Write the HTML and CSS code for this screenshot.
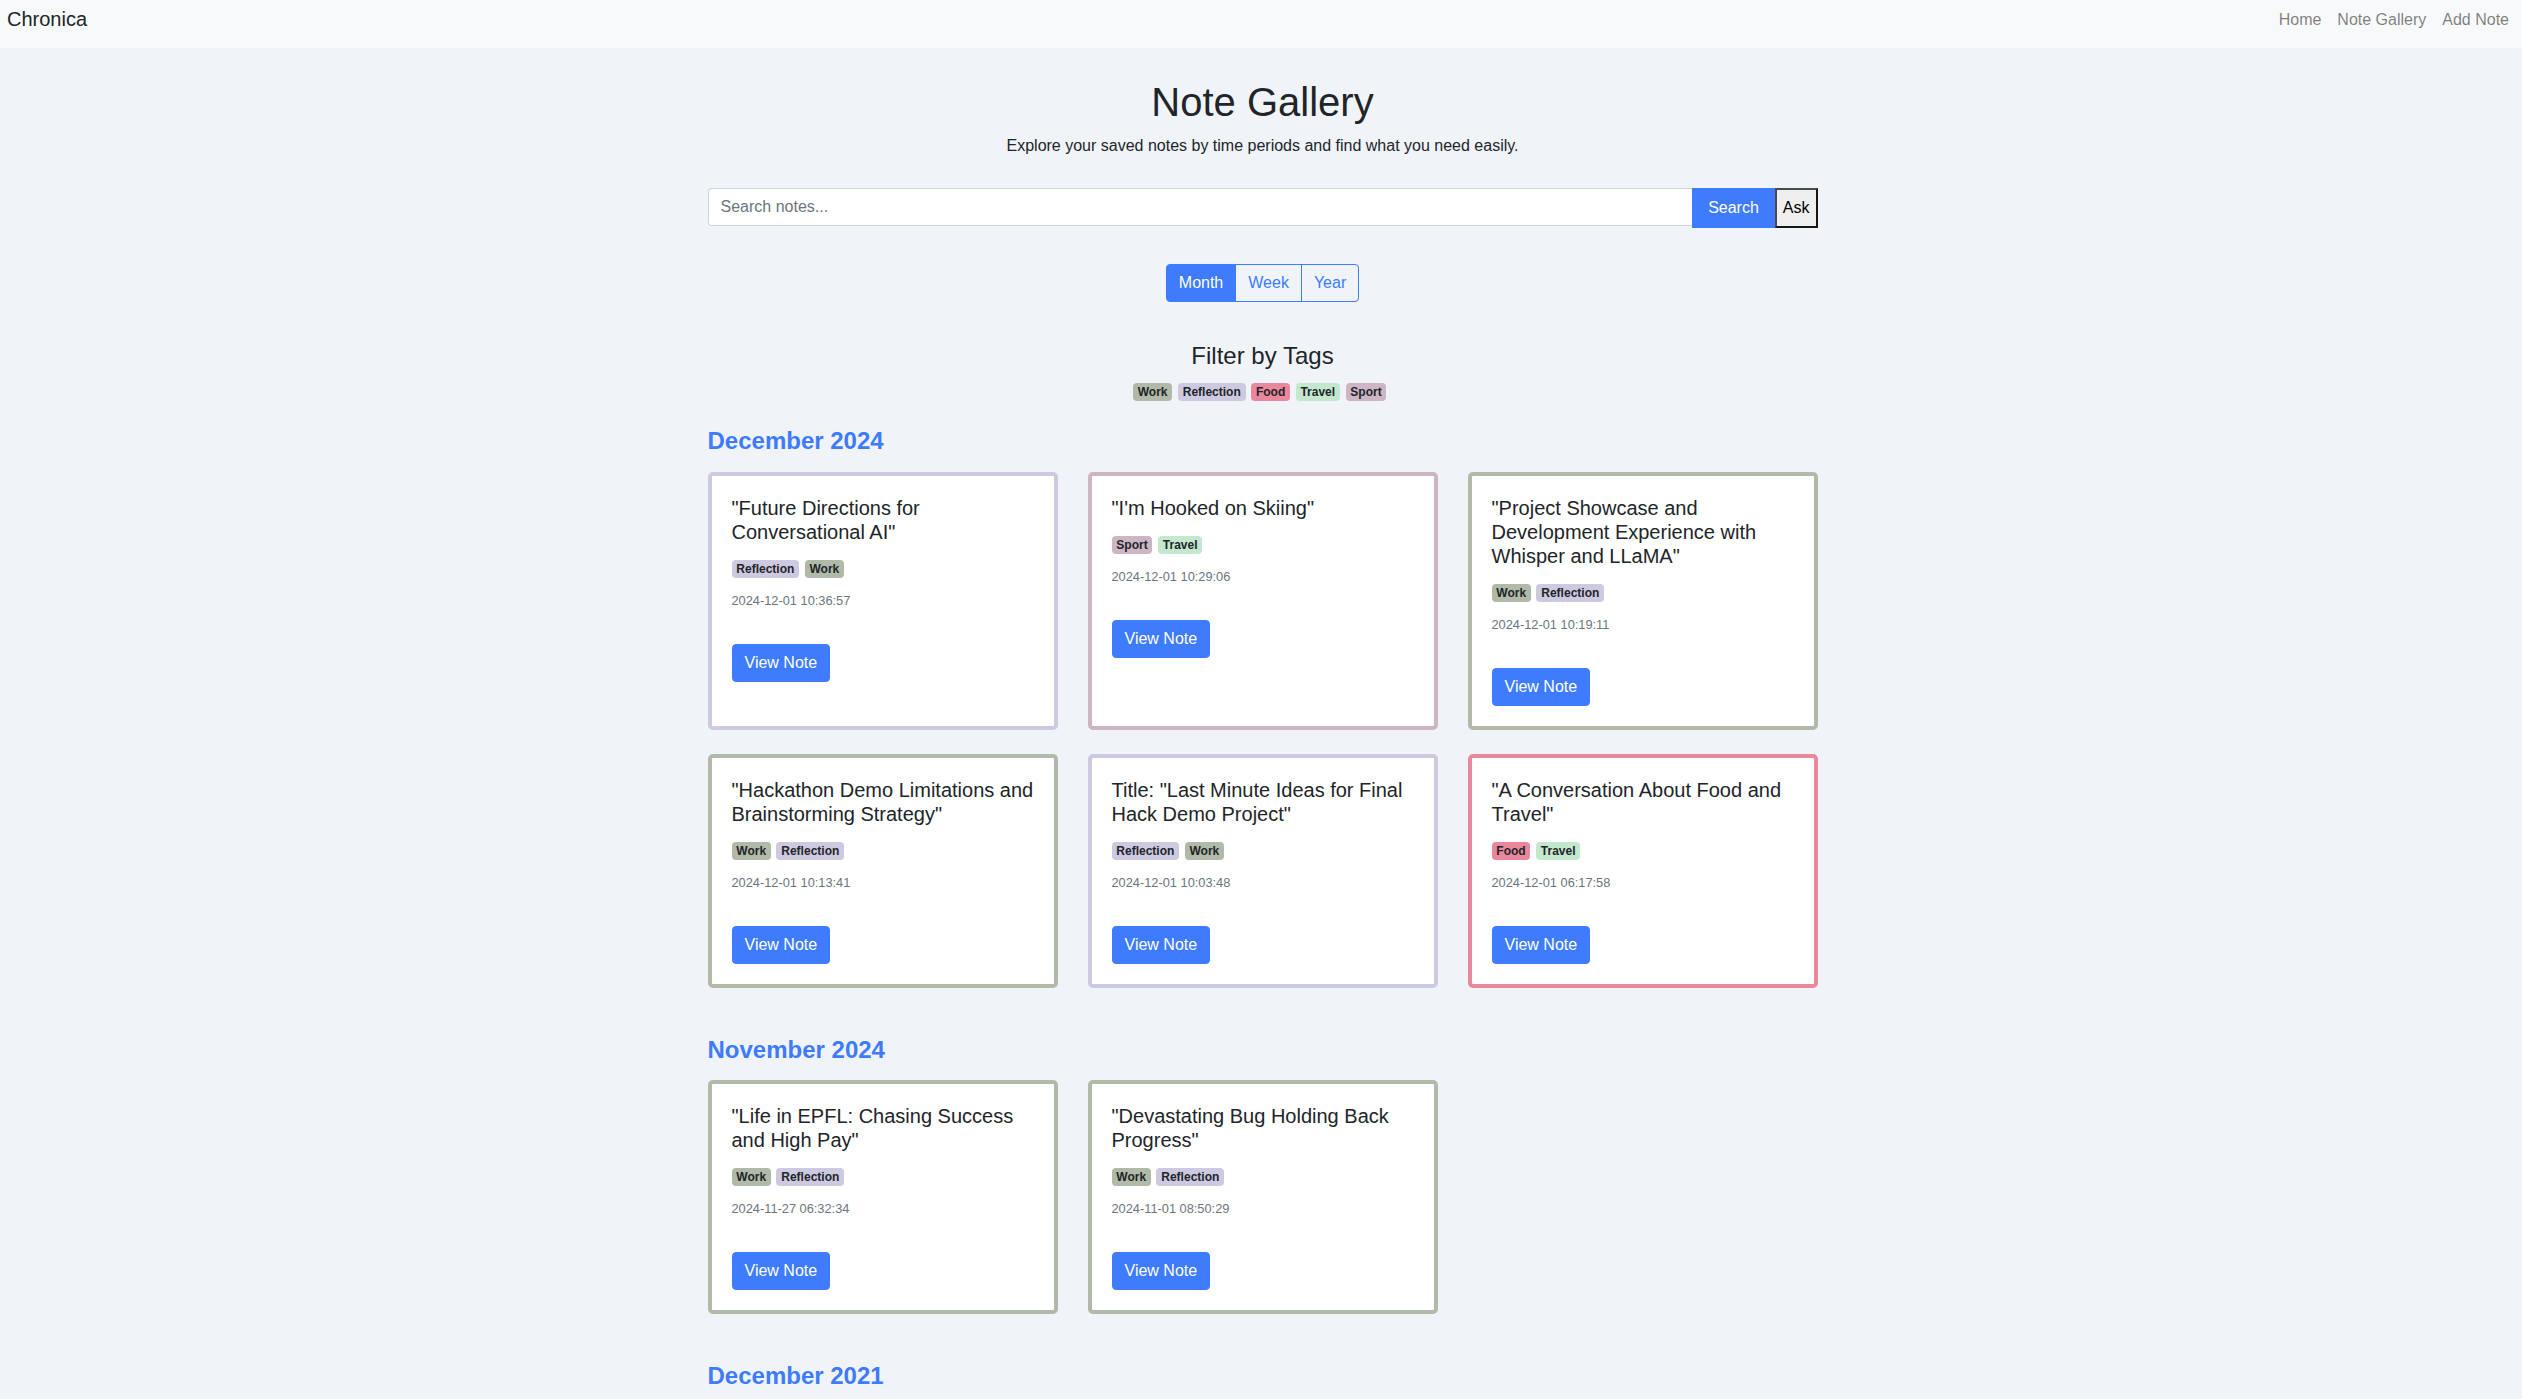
FILE: index.html
```html
<!DOCTYPE html>
<html lang="en">
<head>
<meta charset="utf-8">
<title>Chronica - Note Gallery</title>
<link rel="stylesheet" href="styles.css">
</head>
<body>
<nav class="navbar">
  <a class="brand" href="#">Chronica</a>
  <ul class="nav">
    <li><a class="nav-link" href="#">Home</a></li>
    <li><a class="nav-link" href="#">Note Gallery</a></li>
    <li><a class="nav-link" href="#">Add Note</a></li>
  </ul>
</nav>

<div class="page">
<main class="container">
  <header class="header">
    <h1 class="title">Note Gallery</h1>
    <p class="subtitle">Explore your saved notes by time periods and find what you need easily.</p>
  </header>

  <form class="search-row" onsubmit="return false">
    <input class="search-input" type="text" placeholder="Search notes...">
    <button class="search-btn" type="submit">Search</button>
    <button class="ask-btn" type="button">Ask</button>
  </form>

  <div class="toggle-wrap">
    <div class="btn-group">
      <button class="toggle active" type="button">Month</button><button class="toggle" type="button">Week</button><button class="toggle" type="button">Year</button>
    </div>
  </div>

  <section class="filter">
    <h4 class="filter-title">Filter by Tags</h4>
    <div class="tag-line"><span class="badge work">Work</span><span class="badge reflection">Reflection</span><span class="badge food">Food</span><span class="badge travel">Travel</span><span class="badge sport">Sport</span></div>
  </section>

  <section class="period">
    <h3 class="period-title">December 2024</h3>
    <div class="grid">
      <article class="card b-reflection">
        <h5 class="card-title">"Future Directions for Conversational AI"</h5>
        <div class="tag-line tags"><span class="badge reflection">Reflection</span><span class="badge work">Work</span></div>
        <p class="date"><small>2024-12-01 10:36:57</small></p>
        <a class="view-btn" href="#">View Note</a>
      </article>
      <article class="card b-sport">
        <h5 class="card-title">"I'm Hooked on Skiing"</h5>
        <div class="tag-line tags"><span class="badge sport">Sport</span><span class="badge travel">Travel</span></div>
        <p class="date"><small>2024-12-01 10:29:06</small></p>
        <a class="view-btn" href="#">View Note</a>
      </article>
      <article class="card b-work">
        <h5 class="card-title">"Project Showcase and Development Experience with Whisper and LLaMA"</h5>
        <div class="tag-line tags"><span class="badge work">Work</span><span class="badge reflection">Reflection</span></div>
        <p class="date"><small>2024-12-01 10:19:11</small></p>
        <a class="view-btn" href="#">View Note</a>
      </article>
      <article class="card b-work">
        <h5 class="card-title">"Hackathon Demo Limitations and Brainstorming Strategy"</h5>
        <div class="tag-line tags"><span class="badge work">Work</span><span class="badge reflection">Reflection</span></div>
        <p class="date"><small>2024-12-01 10:13:41</small></p>
        <a class="view-btn" href="#">View Note</a>
      </article>
      <article class="card b-reflection">
        <h5 class="card-title">Title: "Last Minute Ideas for Final Hack Demo Project"</h5>
        <div class="tag-line tags"><span class="badge reflection">Reflection</span><span class="badge work">Work</span></div>
        <p class="date"><small>2024-12-01 10:03:48</small></p>
        <a class="view-btn" href="#">View Note</a>
      </article>
      <article class="card b-food">
        <h5 class="card-title">"A Conversation About Food and Travel"</h5>
        <div class="tag-line tags"><span class="badge food">Food</span><span class="badge travel">Travel</span></div>
        <p class="date"><small>2024-12-01 06:17:58</small></p>
        <a class="view-btn" href="#">View Note</a>
      </article>
    </div>
  </section>

  <section class="period">
    <h3 class="period-title">November 2024</h3>
    <div class="grid">
      <article class="card b-work">
        <h5 class="card-title">"Life in EPFL: Chasing Success and High Pay"</h5>
        <div class="tag-line tags"><span class="badge work">Work</span><span class="badge reflection">Reflection</span></div>
        <p class="date"><small>2024-11-27 06:32:34</small></p>
        <a class="view-btn" href="#">View Note</a>
      </article>
      <article class="card b-work">
        <h5 class="card-title">"Devastating Bug Holding Back Progress"</h5>
        <div class="tag-line tags"><span class="badge work">Work</span><span class="badge reflection">Reflection</span></div>
        <p class="date"><small>2024-11-01 08:50:29</small></p>
        <a class="view-btn" href="#">View Note</a>
      </article>
    </div>
  </section>

  <section class="period">
    <h3 class="period-title">December 2021</h3>
    <div class="grid">
      <article class="card b-reflection">
        <h5 class="card-title">"Looking Back on the Year"</h5>
        <div class="tag-line tags"><span class="badge reflection">Reflection</span></div>
        <p class="date"><small>2021-12-31 22:10:05</small></p>
        <a class="view-btn" href="#">View Note</a>
      </article>
    </div>
  </section>
</main>
</div>
</body>
</html>
```

FILE: styles.css
```css
* { box-sizing: border-box; }

html, body {
  margin: 0;
  padding: 0;
}

body {
  background: #f0f4f9;
  color: #212529;
  font-family: "Liberation Sans", Arial, Helvetica, sans-serif;
  font-size: 16px;
  line-height: 1.5;
}

a { text-decoration: none; }

/* Navbar */
.navbar {
  height: 48px;
  background: #f8f9fa;
  display: flex;
  justify-content: space-between;
  align-items: flex-start;
  padding: 0 5px 0 7px;
}

.brand {
  margin-top: 4px;
  font-size: 20px;
  line-height: 30px;
  color: #212529;
}

.nav {
  display: flex;
  list-style: none;
  margin: 0;
  padding: 0;
}

.nav-link {
  display: block;
  padding: 8px 8px;
  line-height: 24px;
  color: rgba(0, 0, 0, 0.5);
}

/* Page */
.page {
  padding-left: 3px;
}

.container {
  width: 1110px;
  margin: 0 auto;
  padding-top: 30px;
  padding-bottom: 40px;
}

.header { text-align: center; }

.title {
  margin: 0 0 8px;
  font-size: 40px;
  line-height: 48px;
  font-weight: 500;
}

.subtitle {
  margin: 0 0 30px;
  font-size: 16px;
  line-height: 24px;
}

/* Search */
.search-row {
  display: flex;
  align-items: flex-start;
  height: 40px;
  margin: 0;
}

.search-input {
  flex: 1;
  height: 38px;
  padding: 6px 12px;
  font-family: inherit;
  font-size: 16px;
  line-height: 24px;
  color: #495057;
  background: #fff;
  border: 1px solid #ced4da;
  border-right: none;
  border-radius: 4px 0 0 4px;
  outline: none;
}

.search-input::placeholder { color: #6c757d; }

.search-btn {
  height: 40px;
  padding: 0 16px;
  font-family: inherit;
  font-size: 16px;
  color: #fff;
  background: #3e7bfd;
  border: none;
  border-radius: 0;
}

.ask-btn {
  height: 40px;
  padding: 0 6px;
  font-family: inherit;
  font-size: 16px;
  color: #000;
  background: #efefef;
  border: 2px solid;
  border-color: #4a4a4a #161616 #161616 #4a4a4a;
  border-radius: 0;
}

/* Toggle */
.toggle-wrap {
  display: flex;
  justify-content: center;
  margin-top: 36px;
}

.btn-group { display: inline-flex; }

.toggle {
  height: 38px;
  padding: 6px 12px;
  font-family: inherit;
  font-size: 16px;
  line-height: 24px;
  color: #3e7bfd;
  background: transparent;
  border: 1px solid #3e7bfd;
  border-radius: 0;
  margin-left: -1px;
}

.toggle:first-child {
  margin-left: 0;
  border-radius: 4px 0 0 4px;
}

.toggle:last-child { border-radius: 0 4px 4px 0; }

.toggle.active {
  color: #fff;
  background: #3e7bfd;
}

/* Filter */
.filter {
  margin-top: 40px;
  text-align: center;
}

.filter-title {
  margin: 0 0 8px;
  font-size: 24px;
  line-height: 28.8px;
  font-weight: 500;
}

.tag-line {
  line-height: 24px;
  font-size: 16px;
}

.badge {
  display: inline-block;
  padding: 3px 4.8px;
  margin-right: 5.6px;
  font-size: 12px;
  font-weight: 700;
  line-height: 1;
  color: #212529;
  border-radius: 4px;
  white-space: nowrap;
  vertical-align: baseline;
}

.badge.work { background: #b1b9a8; }
.badge.reflection { background: #cdc9e0; }
.badge.food { background: #ea879c; }
.badge.travel { background: #c3e8ce; }
.badge.sport { background: #cdb5c4; }

/* Periods */
.period { padding-top: 24px; }

.period-title {
  margin: 0 0 16px;
  font-size: 24px;
  line-height: 28.8px;
  font-weight: 700;
  color: #3e7bfd;
}

.grid {
  display: grid;
  grid-template-columns: repeat(3, 350px);
  column-gap: 30px;
  row-gap: 24px;
  padding-bottom: 24px;
}

.card {
  display: flex;
  flex-direction: column;
  align-items: flex-start;
  padding: 20px;
  background: #fff;
  border: 4px solid #ccc;
  border-radius: 5px;
}

.card.b-work { border-color: #b1b9a8; }
.card.b-reflection { border-color: #cdc9e0; }
.card.b-food { border-color: #ea879c; }
.card.b-sport { border-color: #cdb5c4; }

.card-title {
  margin: 0 0 12px;
  font-size: 20px;
  line-height: 24px;
  font-weight: 500;
}

.tags { margin-bottom: 8px; }

.date {
  margin: 0 0 31px;
  line-height: 24px;
  color: #6c757d;
}

.date small { font-size: 12.8px; }

.view-btn {
  display: inline-block;
  padding: 6px 12px;
  font-size: 16px;
  line-height: 24px;
  color: #fff;
  background: #3e7bfd;
  border: 1px solid #3e7bfd;
  border-radius: 4px;
}
```
